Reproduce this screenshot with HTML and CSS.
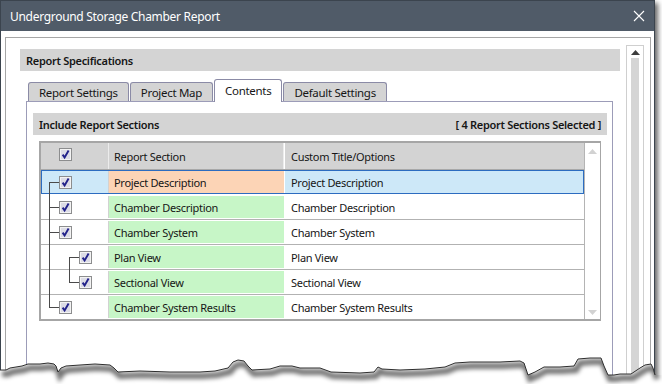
FILE: index.html
```html
<!DOCTYPE html>
<html lang="en">
<head>
    <meta charset="UTF-8">
    <title>Underground Storage Chamber Report</title>
    <link rel="stylesheet" href="styles.css">
</head>
<body>

<div class="window">
    <div class="titlebar">
        <span>Underground Storage Chamber Report</span>
        <svg class="close" width="12" height="12" viewBox="0 0 12 12">
            <path d="M1 1 L11 11 M11 1 L1 11" stroke="#fff" stroke-width="1.1" fill="none"/>
        </svg>
    </div>

    <div class="body">
        <div class="panel">
            <div class="main">
                <div class="spec-head">Report Specifications</div>

                <div class="tabs">
                    <div class="tab">Report Settings</div>
                    <div class="tab">Project Map</div>
                    <div class="tab active">Contents</div>
                    <div class="tab">Default Settings</div>
                </div>

                <div class="tab-page">
                    <div class="subhead">
                        <span>Include Report Sections</span>
                        <span>[ 4 Report Sections Selected ]</span>
                    </div>

                    <div class="grid">
                        <div class="grid-main">
                            <div class="row head">
                                <div class="tree">
                                    <svg class="cb" width="13" height="13" viewBox="0 0 13 13"><rect x=".5" y=".5" width="12" height="12" fill="#f3f3f3" stroke="#8c8d8e"/><rect x="2" y="2" width="9" height="9" fill="#dcdce6"/><path d="M3.6 6.6 L5.6 9.4 L9.6 2.6" fill="none" stroke="#22228a" stroke-width="1.9"/></svg>
                                </div>
                                <div class="sec">Report Section</div>
                                <div class="custom">Custom Title/Options</div>
                            </div>

                            <!-- selected row -->
                            <div class="row selected">
                                <span class="ln v1 bot"></span><span class="ln h1"></span>
                                <div class="tree">
                                    <svg class="cb" width="13" height="13" viewBox="0 0 13 13"><rect x=".5" y=".5" width="12" height="12" fill="#f3f3f3" stroke="#8c8d8e"/><rect x="2" y="2" width="9" height="9" fill="#dcdce6"/><path d="M3.6 6.6 L5.6 9.4 L9.6 2.6" fill="none" stroke="#22228a" stroke-width="1.9"/></svg>
                                </div>
                                <div class="sec orange">Project Description</div>
                                <div class="custom">Project Description</div>
                            </div>

                            <div class="row">
                                <span class="ln v1 full"></span><span class="ln h1"></span>
                                <div class="tree">
                                    <svg class="cb" width="13" height="13" viewBox="0 0 13 13"><rect x=".5" y=".5" width="12" height="12" fill="#f3f3f3" stroke="#8c8d8e"/><rect x="2" y="2" width="9" height="9" fill="#dcdce6"/><path d="M3.6 6.6 L5.6 9.4 L9.6 2.6" fill="none" stroke="#22228a" stroke-width="1.9"/></svg>
                                </div>
                                <div class="sec green">Chamber Description</div>
                                <div class="custom">Chamber Description</div>
                            </div>

                            <div class="row">
                                <span class="ln v1 full"></span><span class="ln h1"></span>
                                <div class="tree">
                                    <svg class="cb" width="13" height="13" viewBox="0 0 13 13"><rect x=".5" y=".5" width="12" height="12" fill="#f3f3f3" stroke="#8c8d8e"/><rect x="2" y="2" width="9" height="9" fill="#dcdce6"/><path d="M3.6 6.6 L5.6 9.4 L9.6 2.6" fill="none" stroke="#22228a" stroke-width="1.9"/></svg>
                                </div>
                                <div class="sec green">Chamber System</div>
                                <div class="custom">Chamber System</div>
                            </div>

                            <div class="row">
                                <span class="ln v1 full"></span><span class="ln v2 bot"></span><span class="ln h2"></span>
                                <div class="tree sub">
                                    <svg class="cb" width="13" height="13" viewBox="0 0 13 13"><rect x=".5" y=".5" width="12" height="12" fill="#f3f3f3" stroke="#8c8d8e"/><rect x="2" y="2" width="9" height="9" fill="#dcdce6"/><path d="M3.6 6.6 L5.6 9.4 L9.6 2.6" fill="none" stroke="#22228a" stroke-width="1.9"/></svg>
                                </div>
                                <div class="sec green">Plan View</div>
                                <div class="custom">Plan View</div>
                            </div>

                            <div class="row">
                                <span class="ln v1 full"></span><span class="ln v2 top"></span><span class="ln h2"></span>
                                <div class="tree sub">
                                    <svg class="cb" width="13" height="13" viewBox="0 0 13 13"><rect x=".5" y=".5" width="12" height="12" fill="#f3f3f3" stroke="#8c8d8e"/><rect x="2" y="2" width="9" height="9" fill="#dcdce6"/><path d="M3.6 6.6 L5.6 9.4 L9.6 2.6" fill="none" stroke="#22228a" stroke-width="1.9"/></svg>
                                </div>
                                <div class="sec green">Sectional View</div>
                                <div class="custom">Sectional View</div>
                            </div>

                            <div class="row last">
                                <span class="ln v1 top"></span><span class="ln h1"></span>
                                <div class="tree">
                                    <svg class="cb" width="13" height="13" viewBox="0 0 13 13"><rect x=".5" y=".5" width="12" height="12" fill="#f3f3f3" stroke="#8c8d8e"/><rect x="2" y="2" width="9" height="9" fill="#dcdce6"/><path d="M3.6 6.6 L5.6 9.4 L9.6 2.6" fill="none" stroke="#22228a" stroke-width="1.9"/></svg>
                                </div>
                                <div class="sec green">Chamber System Results</div>
                                <div class="custom">Chamber System Results</div>
                            </div>
                        </div>

                        <div class="grid-scroll">
                            <svg width="9" height="5" viewBox="0 0 9 5"><path d="M0 5 L4.5 0 L9 5 Z" fill="#d2d2d2"/></svg>
                            <svg width="9" height="5" viewBox="0 0 9 5"><path d="M0 0 L4.5 5 L9 0 Z" fill="#d2d2d2"/></svg>
                        </div>
                    </div>
                </div>
            </div>

            <div class="vscroll">
                <svg class="up" width="9" height="5" viewBox="0 0 9 5"><path d="M0 5 L4.5 0 L9 5 Z" fill="#3c3c3c"/></svg>
                <div class="track"></div>
            </div>
        </div>
    </div>
</div>

<!-- torn bottom edge -->
<svg class="tear" width="662" height="44" viewBox="0 340 662 44">
    <defs>
        <clipPath id="below">
            <polygon points="0,370 6,370 10,368 22,366 28,364 40,364 48,363 54,364 56,366 58,372 61,368 66,366 80,365 95,364 110,365 114,368 118,372 140,371 170,372 200,372 215,371 228,368 233,362 238,360 244,361 248,366 252,370 270,369 280,366 292,366 300,368 320,368 331,372 360,373 374,372 378,367 382,369 400,370 425,369 445,367 455,363 470,362 500,362 520,361 524,363 528,375 535,372 544,367 560,367 574,366 578,359 590,358 601,358 604,366 608,375 614,375 620,374 631,374 640,368 645,365 651,364 653,368 655,375 662,375 662,384 0,384"/>
        </clipPath>
        <filter id="blur" x="-5%" y="-50%" width="110%" height="200%">
            <feGaussianBlur stdDeviation="2.2"/>
        </filter>
    </defs>
    <polygon points="0,370 6,370 10,368 22,366 28,364 40,364 48,363 54,364 56,366 58,372 61,368 66,366 80,365 95,364 110,365 114,368 118,372 140,371 170,372 200,372 215,371 228,368 233,362 238,360 244,361 248,366 252,370 270,369 280,366 292,366 300,368 320,368 331,372 360,373 374,372 378,367 382,369 400,370 425,369 445,367 455,363 470,362 500,362 520,361 524,363 528,375 535,372 544,367 560,367 574,366 578,359 590,358 601,358 604,366 608,375 614,375 620,374 631,374 640,368 645,365 651,364 653,368 655,375 662,375 662,384 0,384" fill="#fff"/>
    <g clip-path="url(#below)">
        <polyline transform="translate(2,4)" filter="url(#blur)" fill="none" stroke="#000" stroke-opacity=".55" stroke-width="6" points="0,370 6,370 10,368 22,366 28,364 40,364 48,363 54,364 56,366 58,372 61,368 66,366 80,365 95,364 110,365 114,368 118,372 140,371 170,372 200,372 215,371 228,368 233,362 238,360 244,361 248,366 252,370 270,369 280,366 292,366 300,368 320,368 331,372 360,373 374,372 378,367 382,369 400,370 425,369 445,367 455,363 470,362 500,362 520,361 524,363 528,375 535,372 544,367 560,367 574,366 578,359 590,358 601,358 604,366 608,375 614,375 620,374 631,374 640,368 645,365 651,364 653,368 655,375"/>
    </g>
    <polyline fill="none" stroke="#2e2e2e" stroke-width="1" points="0,370 6,370 10,368 22,366 28,364 40,364 48,363 54,364 56,366 58,372 61,368 66,366 80,365 95,364 110,365 114,368 118,372 140,371 170,372 200,372 215,371 228,368 233,362 238,360 244,361 248,366 252,370 270,369 280,366 292,366 300,368 320,368 331,372 360,373 374,372 378,367 382,369 400,370 425,369 445,367 455,363 470,362 500,362 520,361 524,363 528,375 535,372 544,367 560,367 574,366 578,359 590,358 601,358 604,366 608,375 614,375 620,374 631,374 640,368 645,365 651,364 653,368 655,375"/>
</svg>

</body>
</html>
```

FILE: styles.css
```css
*{
    margin: 0;
    padding: 0;
    box-sizing: border-box;
}
body{
    width: 662px;
    height: 384px;
    background: #fff;
    font-family: "Noto Sans", "Open Sans", sans-serif;
    font-size: 11px;
    letter-spacing: -0.3px;
    color: #161616;
    overflow: hidden;
    position: relative;
}
.window{
    width: 655px;
    height: 384px;
    border: 1px solid #3b444e;
    border-bottom: none;
    background: #fff;
    box-shadow: 3px 3px 5px rgba(0,0,0,.6);
    display: flex;
    flex-direction: column;
}
.titlebar{
    height: 30px;
    flex: none;
    background: #505b68;
    color: #fff;
    font-size: 12px;
    letter-spacing: -0.3px;
    display: flex;
    align-items: center;
    justify-content: space-between;
    padding: 0 9px 0 9px;
}
.body{
    flex: 1;
    display: flex;
    padding: 6px 3px 0 4px;
}
.panel{
    flex: 1;
    display: flex;
    gap: 6px;
    border: 1px solid #a6a6a6;
    border-bottom: none;
    padding: 7px 6px 0 14px;
}
.main{
    flex: 1;
    display: flex;
    flex-direction: column;
    padding-top: 4px;
}
.spec-head{
    height: 22px;
    background: #d4d4d4;
    font-weight: 600;
    display: flex;
    align-items: center;
    padding-left: 6px;
}

/* tabs */
.tabs{
    height: 30px;
    display: flex;
    align-items: flex-end;
    gap: 1px;
    padding-left: 8px;
    position: relative;
    z-index: 1;
}
.tab{
    height: 19px;
    padding: 0 10px;
    font-size: 11.5px;
    background: #d4d4d4;
    border: 1px solid #8b8ba6;
    border-bottom: none;
    border-radius: 3px 3px 0 0;
    display: flex;
    align-items: center;
}
.tab.active{
    height: 23px;
    margin-bottom: -1px;
    background: #fff;
    padding-bottom: 2px;
}
.tab-page{
    flex: 1;
    margin: 0 7px 0 6px;
    border: 1px solid #9c9cb8;
    border-bottom: none;
    padding: 11px 5px 0 6px;
}
.subhead{
    height: 22px;
    background: #d4d4d4;
    font-weight: 600;
    display: flex;
    align-items: center;
    justify-content: space-between;
    padding: 0 6px;
}

/* grid */
.grid{
    margin: 6px 6px 0 6px;
    border: 2px solid #a6a6a6;
    border-right-width: 1px;
    display: flex;
}
.grid-main{
    flex: 1;
}
.row{
    height: 25px;
    display: flex;
    padding: 1px 0;
    border-bottom: 1px solid #b2b2b2;
    position: relative;
}
.row.last{
    border-bottom: none;
    height: 24px;
}
.row.head{
    height: 27px;
    padding: 0;
    background: #d3d3d3;
    border-bottom: 1px solid #a8a8a8;
}
.row.selected{
    background: #cde8f8;
    box-shadow: inset 0 0 0 1px #2c6cc0;
    border-bottom-color: #fff;
}
.tree{
    width: 68px;
    flex: none;
    display: flex;
    align-items: center;
    padding-left: 18px;
    border-right: 1px solid #d2d2d2;
}
.tree.sub{
    padding-left: 38px;
}
.head .tree{
    border-right-color: #ececec;
    padding-bottom: 3px;
}
.sec{
    width: 175px;
    flex: none;
    display: flex;
    align-items: center;
    padding-left: 5px;
}
.head .sec{
    border-right: 1px solid #ececec;
}
.orange{
    background: #fcd4b6;
}
.green{
    background: #c7f6c7;
}
.custom{
    flex: 1;
    display: flex;
    align-items: center;
    padding-left: 6px;
    border-left: 1px solid #fff;
}
.cb{
    display: block;
}

/* tree connector lines */
.ln{
    position: absolute;
    background: #4a4a4a;
}
.v1, .v2{
    width: 1px;
}
.v1{ left: 8px; }
.v2{ left: 28px; }
.full{ top: 0; bottom: -1px; }
.top{ top: 0; height: 13px; }
.bot{ top: 12px; bottom: -1px; }
.h1, .h2{
    top: 12px;
    height: 1px;
    width: 10px;
}
.h1{ left: 8px; }
.h2{ left: 28px; }

.grid-scroll{
    width: 16px;
    flex: none;
    border-left: 1px solid #b4b4b4;
    display: flex;
    flex-direction: column;
    justify-content: space-between;
    align-items: center;
    padding: 6px 0 4px;
}

/* outer scroll bar */
.vscroll{
    width: 18px;
    flex: none;
    border: 1px solid #cfcfcf;
    border-bottom: none;
    display: flex;
    flex-direction: column;
    align-items: center;
}
.vscroll .up{
    margin: 4px 0 3px;
}
.track{
    width: 8px;
    flex: 1;
    background: #d5d5d5;
}

.tear{
    position: absolute;
    left: 0;
    bottom: 0;
}
```
